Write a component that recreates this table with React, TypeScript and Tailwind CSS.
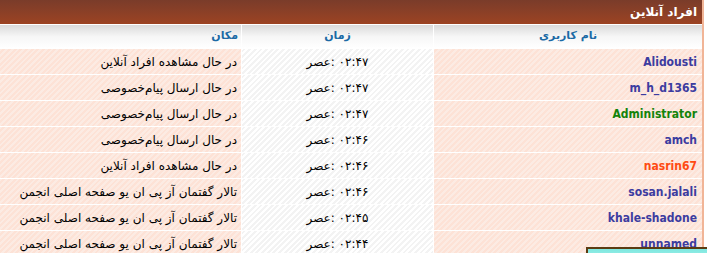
import React from "react";

type Row = { user: string; color: string; time: string; loc: string };

const rows: Row[] = [
  { user: "Alidousti", color: "text-[#3c3ca0]", time: "۰۲:۴۷ :عصر", loc: "در حال مشاهده افراد آنلاین" },
  { user: "m_h_d1365", color: "text-[#3c3ca0]", time: "۰۲:۴۷ :عصر", loc: "در حال ارسال پیام‌خصوصی" },
  { user: "Administrator", color: "text-[#13830a]", time: "۰۲:۴۷ :عصر", loc: "در حال ارسال پیام‌خصوصی" },
  { user: "amch", color: "text-[#3c3ca0]", time: "۰۲:۴۶ :عصر", loc: "در حال ارسال پیام‌خصوصی" },
  { user: "nasrin67", color: "text-[#ff4a12]", time: "۰۲:۴۶ :عصر", loc: "در حال مشاهده افراد آنلاین" },
  { user: "sosan.jalali", color: "text-[#3c3ca0]", time: "۰۲:۴۶ :عصر", loc: "تالار گفتمان آز پی ان یو صفحه اصلی انجمن" },
  { user: "khale-shadone", color: "text-[#3c3ca0]", time: "۰۲:۴۵ :عصر", loc: "تالار گفتمان آز پی ان یو صفحه اصلی انجمن" },
  { user: "unnamed", color: "text-[#3c3ca0]", time: "۰۲:۴۴ :عصر", loc: "تالار گفتمان آز پی ان یو صفحه اصلی انجمن" },
];

const salmon =
  "bg-[repeating-linear-gradient(-45deg,#fde2d6_0px,#fde2d6_2px,#fcebe3_2px,#fcebe3_4px)]";
const white =
  "bg-[repeating-linear-gradient(-45deg,#ffffff_0px,#ffffff_2px,#f3f3f3_2px,#f3f3f3_4px)]";

export default function App() {
  return (
    <div className="relative w-[707px] h-[253px] overflow-hidden bg-white font-['DejaVu_Sans',_sans-serif]">
      <div dir="rtl" className="w-[704px] border-r-2 border-[#f1b597] flex flex-col gap-px bg-white">
        <div className="h-[24px] bg-gradient-to-b from-[#7a3c2a] to-[#9c4322] flex items-center px-[5px] text-white font-bold text-[12px]">
          افراد آنلاین
        </div>
        <div className="grid grid-cols-[268px_191px_241px] gap-px">
          <div className="h-[23px] bg-gradient-to-b from-[#dadada] via-[#f6f6f6] to-white flex items-center justify-center text-[11px] font-bold text-[#1b6aa5]">
            نام کاربری
          </div>
          <div className="h-[23px] bg-gradient-to-b from-[#dadada] via-[#f6f6f6] to-white flex items-center justify-center text-[11px] font-bold text-[#1b6aa5]">
            زمان
          </div>
          <div className="h-[23px] bg-gradient-to-b from-[#dadada] via-[#f6f6f6] to-white flex items-center px-[3px] text-[11px] font-bold text-[#1b6aa5]">
            مکان
          </div>
        </div>
        {rows.map((r, i) => (
          <div key={i} className="grid grid-cols-[268px_191px_241px] gap-px">
            <div className={`h-[25px] ${salmon} flex items-center px-[5px] text-[12px] font-bold ${r.color}`}>
              <span dir="ltr" className="font-['DejaVu_Sans_Condensed','DejaVu_Sans',sans-serif] font-stretch-condensed">
                {r.user}
              </span>
            </div>
            <div className={`h-[25px] ${white} flex items-center justify-center text-[12px] text-black`}>
              {r.time}
            </div>
            <div className={`h-[25px] ${salmon} flex items-center px-[4px] text-[12px] text-black`}>
              {r.loc}
            </div>
          </div>
        ))}
      </div>
      <div className="absolute left-[586px] top-[247px] w-[140px] h-[30px] border-2 border-[#5b3b12] bg-gradient-to-b from-[#7fe8e0] to-[#c8f7f2]" />
    </div>
  );
}
